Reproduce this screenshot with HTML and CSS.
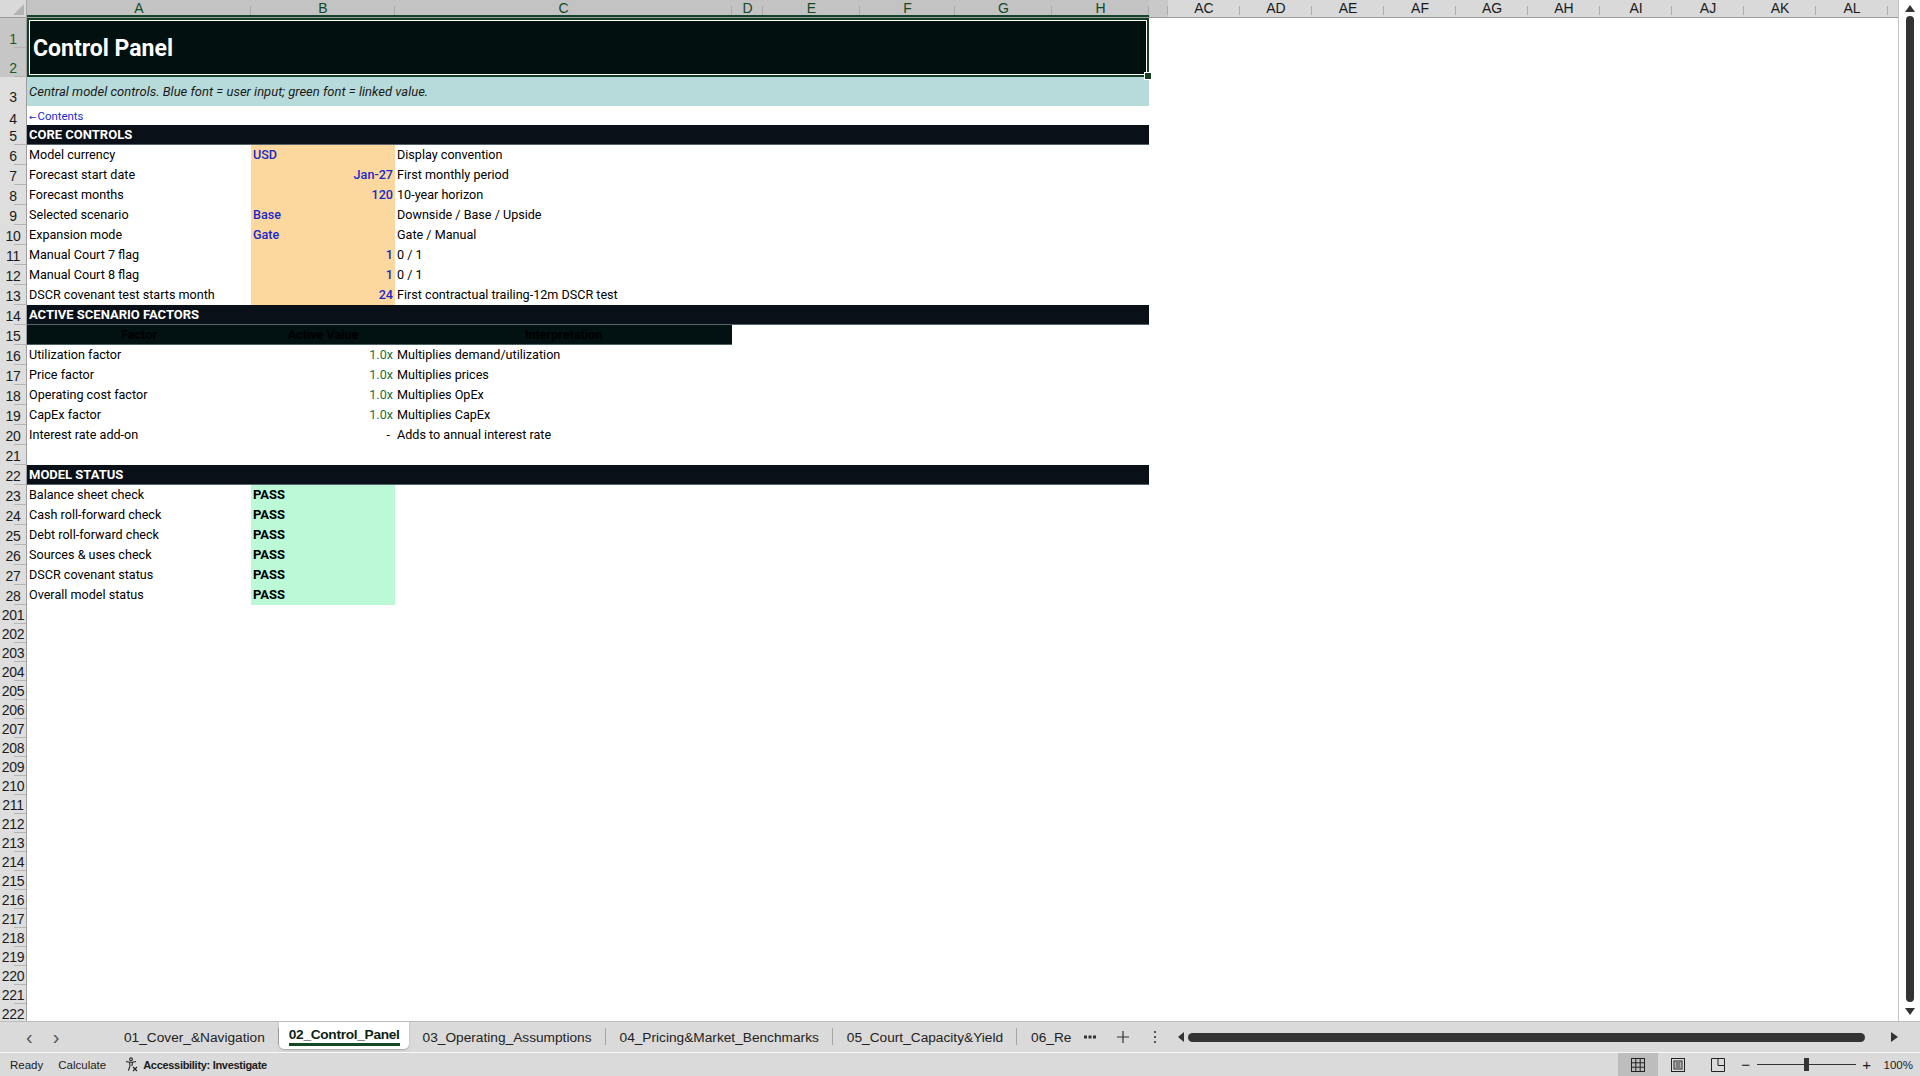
FILE: index.html
```html
<!DOCTYPE html>
<html lang="en">
<head>
    <meta charset="UTF-8">
    <title>02_Control_Panel</title>
    <link rel="stylesheet" href="styles.css">
</head>
<body>

<div class="app">
    <div class="sheet">
        <div class="grid">
            <!-- column headers -->
            <div class="row colhead">
                <div class="corner"><span class="tri"></span></div>
                <div class="ch sel">A</div>
                <div class="ch sel">B</div>
                <div class="ch sel">C</div>
                <div class="ch sel">D</div>
                <div class="ch sel">E</div>
                <div class="ch sel">F</div>
                <div class="ch sel">G</div>
                <div class="ch sel">H</div>
                <div class="ch stub"></div>
                <div class="ch">AC</div>
                <div class="ch">AD</div>
                <div class="ch">AE</div>
                <div class="ch">AF</div>
                <div class="ch">AG</div>
                <div class="ch">AH</div>
                <div class="ch">AI</div>
                <div class="ch">AJ</div>
                <div class="ch">AK</div>
                <div class="ch">AL</div>
                <div class="ch fill"></div>
            </div>

            <!-- rows 1-2 merged title -->
            <div class="title-block">
                <div class="rh sel r1">1</div>
                <div class="title">Control Panel<span class="handle"></span></div>
                <div class="rh sel r2">2</div>
            </div>

            <div class="row tall">
                <div class="rh">3</div>
                <div class="c note">Central model controls. Blue font = user input; green font = linked value.</div>
            </div>
            <div class="row">
                <div class="rh">4</div>
                <div class="c link"><span class="larr">&larr;</span>Contents</div>
            </div>

            <div class="row">
                <div class="rh">5</div>
                <div class="c sec">CORE CONTROLS</div>
            </div>
            <div class="row">
                <div class="rh">6</div>
                <div class="c">Model currency</div>
                <div class="c inp">USD</div>
                <div class="c">Display convention</div>
            </div>
            <div class="row">
                <div class="rh">7</div>
                <div class="c">Forecast start date</div>
                <div class="c inp num">Jan-27</div>
                <div class="c">First monthly period</div>
            </div>
            <div class="row">
                <div class="rh">8</div>
                <div class="c">Forecast months</div>
                <div class="c inp num">120</div>
                <div class="c">10-year horizon</div>
            </div>
            <div class="row">
                <div class="rh">9</div>
                <div class="c">Selected scenario</div>
                <div class="c inp">Base</div>
                <div class="c">Downside / Base / Upside</div>
            </div>
            <div class="row">
                <div class="rh">10</div>
                <div class="c">Expansion mode</div>
                <div class="c inp">Gate</div>
                <div class="c">Gate / Manual</div>
            </div>
            <div class="row">
                <div class="rh">11</div>
                <div class="c">Manual Court 7 flag</div>
                <div class="c inp num">1</div>
                <div class="c">0 / 1</div>
            </div>
            <div class="row">
                <div class="rh">12</div>
                <div class="c">Manual Court 8 flag</div>
                <div class="c inp num">1</div>
                <div class="c">0 / 1</div>
            </div>
            <div class="row">
                <div class="rh">13</div>
                <div class="c">DSCR covenant test starts month</div>
                <div class="c inp num">24</div>
                <div class="c">First contractual trailing-12m DSCR test</div>
            </div>

            <div class="row">
                <div class="rh">14</div>
                <div class="c sec">ACTIVE SCENARIO FACTORS</div>
            </div>
            <div class="row">
                <div class="rh">15</div>
                <div class="c th">Factor</div>
                <div class="c th">Active Value</div>
                <div class="c th">Interpretation</div>
            </div>
            <div class="row">
                <div class="rh">16</div>
                <div class="c">Utilization factor</div>
                <div class="c lnk num">1.0x</div>
                <div class="c">Multiplies demand/utilization</div>
            </div>
            <div class="row">
                <div class="rh">17</div>
                <div class="c">Price factor</div>
                <div class="c lnk num">1.0x</div>
                <div class="c">Multiplies prices</div>
            </div>
            <div class="row">
                <div class="rh">18</div>
                <div class="c">Operating cost factor</div>
                <div class="c lnk num">1.0x</div>
                <div class="c">Multiplies OpEx</div>
            </div>
            <div class="row">
                <div class="rh">19</div>
                <div class="c">CapEx factor</div>
                <div class="c lnk num">1.0x</div>
                <div class="c">Multiplies CapEx</div>
            </div>
            <div class="row">
                <div class="rh">20</div>
                <div class="c">Interest rate add-on</div>
                <div class="c num dash">-</div>
                <div class="c">Adds to annual interest rate</div>
            </div>
            <div class="row">
                <div class="rh">21</div>
            </div>

            <div class="row">
                <div class="rh">22</div>
                <div class="c sec">MODEL STATUS</div>
            </div>
            <div class="row">
                <div class="rh">23</div>
                <div class="c">Balance sheet check</div>
                <div class="c pass">PASS</div>
            </div>
            <div class="row">
                <div class="rh">24</div>
                <div class="c">Cash roll-forward check</div>
                <div class="c pass">PASS</div>
            </div>
            <div class="row">
                <div class="rh">25</div>
                <div class="c">Debt roll-forward check</div>
                <div class="c pass">PASS</div>
            </div>
            <div class="row">
                <div class="rh">26</div>
                <div class="c">Sources &amp; uses check</div>
                <div class="c pass">PASS</div>
            </div>
            <div class="row">
                <div class="rh">27</div>
                <div class="c">DSCR covenant status</div>
                <div class="c pass">PASS</div>
            </div>
            <div class="row">
                <div class="rh">28</div>
                <div class="c">Overall model status</div>
                <div class="c pass">PASS</div>
            </div>

            <!-- hidden rows 29-200, empty rows below -->
            <div class="row short"><div class="rh">201</div></div>
            <div class="row short"><div class="rh">202</div></div>
            <div class="row short"><div class="rh">203</div></div>
            <div class="row short"><div class="rh">204</div></div>
            <div class="row short"><div class="rh">205</div></div>
            <div class="row short"><div class="rh">206</div></div>
            <div class="row short"><div class="rh">207</div></div>
            <div class="row short"><div class="rh">208</div></div>
            <div class="row short"><div class="rh">209</div></div>
            <div class="row short"><div class="rh">210</div></div>
            <div class="row short"><div class="rh">211</div></div>
            <div class="row short"><div class="rh">212</div></div>
            <div class="row short"><div class="rh">213</div></div>
            <div class="row short"><div class="rh">214</div></div>
            <div class="row short"><div class="rh">215</div></div>
            <div class="row short"><div class="rh">216</div></div>
            <div class="row short"><div class="rh">217</div></div>
            <div class="row short"><div class="rh">218</div></div>
            <div class="row short"><div class="rh">219</div></div>
            <div class="row short"><div class="rh">220</div></div>
            <div class="row short"><div class="rh">221</div></div>
            <div class="row short"><div class="rh">222</div></div>
        </div>

        <div class="vscroll">
            <span class="arrow up"></span>
            <span class="thumb"></span>
            <span class="arrow down"></span>
        </div>
    </div>

    <!-- sheet tabs -->
    <div class="tabbar">
        <div class="tabnav">
            <span>&#8249;</span>
            <span>&#8250;</span>
        </div>
        <div class="tabs">
            <div class="tab">01_Cover_&amp;Navigation</div>
            <div class="tab active"><span>02_Control_Panel</span></div>
            <div class="tab">03_Operating_Assumptions</div>
            <div class="tab">04_Pricing&amp;Market_Benchmarks</div>
            <div class="tab">05_Court_Capacity&amp;Yield</div>
            <div class="tab last">06_Re</div>
        </div>
        <div class="tabtools">
            <svg class="dots" width="12" height="4" viewBox="0 0 12 4" fill="#333">
                <rect x="0" y="0.5" width="3" height="3"/>
                <rect x="4.5" y="0.5" width="3" height="3"/>
                <rect x="9" y="0.5" width="3" height="3"/>
            </svg>
            <svg class="plus" width="12" height="12" viewBox="0 0 12 12" stroke="#333" stroke-width="1.2">
                <path d="M6 0 V12 M0 6 H12"/>
            </svg>
            <svg class="vdots" width="4" height="14" viewBox="0 0 4 14" fill="#333">
                <circle cx="2" cy="2" r="1.1"/>
                <circle cx="2" cy="7" r="1.1"/>
                <circle cx="2" cy="12" r="1.1"/>
            </svg>
        </div>
        <div class="hscroll">
            <span class="harrow left"></span>
            <span class="hthumb"></span>
            <span class="harrow right"></span>
        </div>
    </div>

    <!-- status bar -->
    <div class="statusbar">
        <span class="st">Ready</span>
        <span class="st">Calculate</span>
        <span class="st acc">
            <svg width="15" height="15" viewBox="0 0 15 15" fill="none" stroke="#222" stroke-width="1.1">
                <circle cx="7" cy="2.3" r="1.4"/>
                <path d="M2 4.6 C4 5.4 10 5.4 12 4.6"/>
                <path d="M5.6 5.3 L6 9 L4.4 13.6 M8.4 5.3 L8 9"/>
                <path d="M9 10 L13 14 M13 10 L9 14"/>
            </svg>
            <b>Accessibility: Investigate</b>
        </span>

        <div class="views">
            <span class="view on">
                <svg width="16" height="16" viewBox="0 0 16 16" fill="none" stroke="#222" stroke-width="1">
                    <rect x="1.5" y="1.5" width="13" height="13"/>
                    <path d="M1.5 5.8 H14.5 M1.5 10.2 H14.5 M5.8 1.5 V14.5 M10.2 1.5 V14.5"/>
                </svg>
            </span>
            <span class="view">
                <svg width="16" height="16" viewBox="0 0 16 16" fill="none" stroke="#222" stroke-width="1">
                    <rect x="1.5" y="1.5" width="13" height="13"/>
                    <rect x="4" y="4" width="8" height="8"/>
                    <path d="M5.5 6 H10.5 M5.5 8 H10.5 M5.5 10 H10.5"/>
                </svg>
            </span>
            <span class="view">
                <svg width="16" height="16" viewBox="0 0 16 16" fill="none" stroke="#222" stroke-width="1">
                    <path d="M1.5 1.5 H14.5 V14.5 H1.5 Z"/>
                    <path d="M8 1.5 V8.5 H14.5"/>
                </svg>
            </span>
        </div>
        <div class="zoom">
            <span class="zbtn">&minus;</span>
            <span class="slider"><span class="knob"></span></span>
            <span class="zbtn">+</span>
            <span class="pct">100%</span>
        </div>
    </div>
</div>

</body>
</html>
```

FILE: styles.css
```css
body {
    margin: 0;
    padding: 0;
    background-color: #ffffff;
    font-family: Roboto, "Liberation Sans", sans-serif;
    color: #000;
}
.app {
    width: 1920px;
    height: 1076px;
    display: flex;
    flex-direction: column;
    overflow: hidden;
}

/* ---- sheet ---- */
.sheet {
    flex: 1;
    display: flex;
    overflow: hidden;
}
.grid {
    --cols: 27px 224px 144px 337px 31px 97px 95px 97px 97px 19px repeat(10, 72px) 1fr;
    flex: 1;
    overflow: hidden;
}
.row {
    display: grid;
    grid-template-columns: var(--cols);
    height: 20px;
}
.row.tall {
    height: 28px;
}
.row.short {
    height: 19px;
}

/* column headers */
.colhead {
    height: 18px;
    background-color: #d9d9d9;
    border-bottom: 1px solid #9b9b9b;
    box-sizing: border-box;
}
.corner {
    position: relative;
    background-color: #d9d9d9;
    border-right: 1px solid #a6a6a6;
}
.corner .tri {
    position: absolute;
    right: 2px;
    bottom: 2px;
    width: 0;
    height: 0;
    border-left: 11px solid transparent;
    border-bottom: 11px solid #b3b3b3;
}
.ch {
    position: relative;
    font-family: "Liberation Sans", Arial, sans-serif;
    font-size: 14px;
    line-height: 17px;
    text-align: center;
    color: #1a1a1a;
}
.ch::after {
    content: "";
    position: absolute;
    right: 0;
    top: 6px;
    bottom: 2px;
    width: 1px;
    background-color: #ababab;
}
.ch.sel {
    background-color: #c3c3c3;
    color: #124a25;
    box-shadow: inset 0 -2px 0 #14442a;
}
.ch.stub {
    background-color: #c9c9c9;
}
.ch.fill::after {
    display: none;
}

/* row headers */
.rh {
    position: relative;
    background-color: #dedede;
    border-right: 1px solid #9e9e9e;
    font-family: "Liberation Sans", Arial, sans-serif;
    font-size: 14px;
    line-height: 16px;
    color: #1a1a1a;
    display: flex;
    align-items: flex-end;
    justify-content: center;
    padding-bottom: 1px;
    box-sizing: border-box;
    letter-spacing: -0.3px;
}
.rh::after {
    content: "";
    position: absolute;
    right: 0;
    bottom: 0;
    width: 12px;
    height: 1px;
    background-color: #b4b4b4;
}
.rh.sel {
    background-color: #c6c6c6;
    color: #145a2c;
}

/* title rows 1-2 */
.title-block {
    display: grid;
    grid-template-columns: var(--cols);
    grid-template-rows: 30px 29px;
}
.title-block .r1 {
    grid-column: 1;
    grid-row: 1;
}
.title-block .r2 {
    grid-column: 1;
    grid-row: 2;
}
.title {
    grid-column: 2 / 10;
    grid-row: 1 / 3;
    position: relative;
    background-color: #021010;
    border: 2px solid #173f25;
    box-shadow: inset 0 0 0 1px #ffffff;
    color: #ffffff;
    font-weight: 700;
    font-size: 23px;
    display: flex;
    align-items: center;
    padding-left: 4px;
    padding-top: 2px;
}
.title .handle {
    position: absolute;
    right: -5px;
    bottom: -5px;
    width: 6px;
    height: 6px;
    background-color: #173f25;
    border: 1px solid #ffffff;
}

/* cells */
.c {
    font-size: 12.6px;
    line-height: 20px;
    padding: 0 2px;
    white-space: nowrap;
    overflow: visible;
}
.note {
    grid-column: 2 / 10;
    background-color: #b7dbdb;
    font-style: italic;
    font-size: 13px;
    color: #1a1a1a;
    line-height: 28px;
    padding-top: 1px;
}
.link {
    color: #1a2bcc;
    font-size: 11.4px;
    line-height: 22px;
}
.link .larr {
    font-family: "DejaVu Sans", sans-serif;
    font-size: 9px;
    margin-right: 1px;
}
.sec {
    grid-column: 2 / 10;
    background-color: #0a1018;
    color: #ffffff;
    font-weight: 700;
    font-size: 13px;
    line-height: 19px;
    border-bottom: 1px solid #56646c;
}
.th {
    background-color: #021111;
    color: #000;
    font-weight: 700;
    text-align: center;
    border-bottom: 1px solid #4d6262;
    line-height: 19px;
}
.inp {
    background-color: #fcd89e;
    color: #1b28c9;
    font-weight: 500;
}
.num {
    text-align: right;
}
.lnk {
    color: #23703a;
}
.dash {
    padding-right: 5px;
}
.pass {
    background-color: #bbf9d7;
    font-weight: 700;
    font-size: 13px;
}

/* vertical scrollbar */
.vscroll {
    width: 22px;
    border-left: 1px solid #c4c4c4;
    box-sizing: border-box;
    background-color: #ffffff;
    display: flex;
    flex-direction: column;
    align-items: center;
    padding-left: 1px;
}
.vscroll .arrow {
    width: 0;
    height: 0;
    border-left: 5px solid transparent;
    border-right: 5px solid transparent;
    margin: 5px 0 4px;
}
.vscroll .up {
    border-bottom: 7px solid #333;
}
.vscroll .down {
    border-top: 7px solid #333;
    margin: 6px 0 6px;
}
.vscroll .thumb {
    flex: 1;
    width: 8px;
    background-color: #333333;
    border-radius: 4px;
}

/* ---- sheet tabs ---- */
.tabbar {
    height: 31px;
    flex: none;
    background-color: #dadada;
    border-top: 1px solid #bdbdbd;
    box-sizing: border-box;
    display: flex;
    align-items: stretch;
    font-family: "Liberation Sans", Arial, sans-serif;
    font-size: 13.7px;
    color: #222;
}
.tabnav {
    width: 110px;
    display: flex;
    align-items: center;
    gap: 20px;
    padding-left: 26px;
    box-sizing: border-box;
    font-size: 20px;
    color: #555;
}
.tabs {
    display: flex;
    width: 968px;
    overflow: hidden;
}
.tab {
    position: relative;
    padding: 0 14px;
    display: flex;
    align-items: center;
    white-space: nowrap;
}
.tab::after {
    content: "";
    position: absolute;
    right: 0;
    top: 6px;
    bottom: 7px;
    width: 1px;
    background-color: #a6a6a6;
}
.tab.active {
    background-color: #ffffff;
    padding: 0 9px 0 10px;
    margin-top: -1px;
    margin-bottom: 3px;
    border-radius: 0 0 5px 5px;
    box-shadow: 0 1px 2px rgba(0, 0, 0, 0.25);
    font-weight: 700;
    color: #0f1f14;
    letter-spacing: -0.3px;
}
.tab.active span {
    border-bottom: 3px solid #134a25;
    padding-top: 2px;
    line-height: 17px;
}
.tab.active::after {
    display: none;
}
.tab.last {
    padding-right: 0;
}
.tab.last::after {
    display: none;
}
.tabtools {
    width: 100px;
    display: flex;
    align-items: center;
    padding-left: 6px;
    box-sizing: border-box;
}
.tabtools .dots {
    margin-left: 0;
}
.tabtools .plus {
    margin-left: 21px;
}
.tabtools .vdots {
    margin-left: 24px;
}
.hscroll {
    flex: 1;
    display: flex;
    align-items: center;
    padding-right: 22px;
}
.harrow {
    width: 0;
    height: 0;
    border-top: 5px solid transparent;
    border-bottom: 5px solid transparent;
}
.harrow.left {
    border-right: 6px solid #333;
    margin-right: 4px;
}
.harrow.right {
    border-left: 7px solid #333;
    margin-left: 26px;
}
.hthumb {
    flex: 1;
    height: 9px;
    background-color: #333333;
    border-radius: 5px;
}

/* ---- status bar ---- */
.statusbar {
    height: 23px;
    flex: none;
    background-color: #dadada;
    border-top: 1px solid #f7f7f7;
    display: flex;
    align-items: center;
    font-family: "Liberation Sans", Arial, sans-serif;
    font-size: 11.5px;
    color: #1a1a1a;
    padding-left: 10px;
}
.st {
    margin-right: 15px;
}
.acc {
    display: flex;
    align-items: center;
    gap: 4px;
    margin-left: 3px;
}
.acc b {
    font-weight: 700;
    font-size: 11px;
    letter-spacing: -0.3px;
}
.views {
    margin-left: auto;
    display: flex;
    height: 100%;
    margin-right: 2px;
}
.view {
    width: 40px;
    display: flex;
    align-items: center;
    justify-content: center;
}
.view.on {
    background-color: #bdbdbd;
}
.zoom {
    display: flex;
    align-items: center;
    gap: 5px;
    padding-right: 7px;
}
.zbtn {
    font-size: 15px;
    width: 12px;
    text-align: center;
}
.slider {
    position: relative;
    width: 99px;
    height: 1px;
    background-color: #333;
}
.knob {
    position: absolute;
    left: 47px;
    top: -6px;
    width: 5px;
    height: 13px;
    background-color: #333;
}
.pct {
    margin-left: 6px;
    font-size: 11.5px;
}
```
